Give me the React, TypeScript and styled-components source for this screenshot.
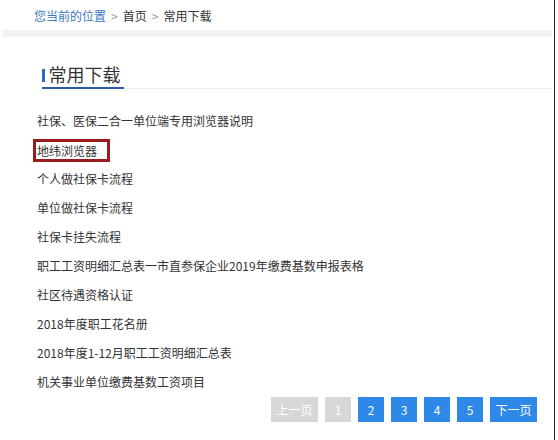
import styled, { createGlobalStyle } from 'styled-components';

const GlobalStyle = createGlobalStyle`
  html, body {
    margin: 0;
    padding: 0;
    background: #fff;
  }
  body {
    font-family: "Noto Sans CJK SC", "Noto Sans", sans-serif;
    color: #333;
  }
`;

const Page = styled.div`
  width: 555px;
  height: 440px;
  border-right: 1.5px solid #2a2a2a;
  box-sizing: border-box;
  overflow: hidden;
`;

const Breadcrumb = styled.div`
  display: flex;
  align-items: center;
  gap: 4px;
  height: 30px;
  padding-left: 34px;
  font-size: 12px;
`;

const CrumbLabel = styled.span`
  color: #3a78c4;
`;

const CrumbSep = styled.span`
  color: #999;
  font-size: 12px;
  padding: 0 1px;
`;

const CrumbLink = styled.span`
  color: #333;
`;

const Band = styled.div`
  height: 7px;
  margin: 0 2px 0 2px;
  background: #f3f3f3;
`;

const Content = styled.div`
  padding: 24px 2px 0 37px;
`;

const HeadingRow = styled.div`
  margin-left: 5px;
  border-bottom: 1px solid #eeeeee;
  display: flex;
`;

const HeadingTitle = styled.h2`
  margin: 0 0 -1px 0;
  display: flex;
  align-items: center;
  gap: 4px;
  font-size: 18px;
  font-weight: normal;
  line-height: 26px;
  color: #333;
  border-bottom: 2px solid #2b5ca6;
  padding-right: 3px;

  &::before {
    content: '';
    width: 2.5px;
    height: 13px;
    margin-top: 2px;
    background: #2a6bc0;
  }
`;

const List = styled.ul`
  list-style: none;
  margin: 17px 0 0 0;
  padding: 0;
`;

const Item = styled.li`
  font-size: 12px;
  line-height: 29px;
  height: 29px;
  color: #333;
  white-space: nowrap;
`;

const Marked = styled.span`
  display: inline-block;
  vertical-align: middle;
  margin-left: -4px;
  padding: 0 10px 0 1px;
  line-height: 17px;
  border: 3px solid #9c1c1c;
  margin-top: -2px;
`;

const Pager = styled.div`
  display: flex;
  justify-content: flex-end;
  gap: 7px;
  padding-right: 17px;
  margin-top: 1px;
`;

const PageBtn = styled.span<{ $wide?: boolean; $active?: boolean }>`
  display: flex;
  align-items: center;
  justify-content: center;
  width: ${({ $wide }) => ($wide ? '47px' : '26px')};
  height: 25px;
  font-size: 12px;
  color: #fff;
  background: ${({ $active }) => ($active ? '#2e88e8' : '#d7d7d7')};
`;

const items = [
  '社保、医保二合一单位端专用浏览器说明',
  '地纬浏览器',
  '个人做社保卡流程',
  '单位做社保卡流程',
  '社保卡挂失流程',
  '职工工资明细汇总表一市直参保企业2019年缴费基数申报表格',
  '社区待遇资格认证',
  '2018年度职工花名册',
  '2018年度1-12月职工工资明细汇总表',
  '机关事业单位缴费基数工资项目',
];

export default function App() {
  return (
    <>
      <GlobalStyle />
      <Page>
        <Breadcrumb>
          <CrumbLabel>您当前的位置</CrumbLabel>
          <CrumbSep>&gt;</CrumbSep>
          <CrumbLink>首页</CrumbLink>
          <CrumbSep>&gt;</CrumbSep>
          <CrumbLink>常用下载</CrumbLink>
        </Breadcrumb>
        <Band />
        <Content>
          <HeadingRow>
            <HeadingTitle>常用下载</HeadingTitle>
          </HeadingRow>
          <List>
            {items.map((text, i) => (
              <Item key={i}>{i === 1 ? <Marked>{text}</Marked> : text}</Item>
            ))}
          </List>
        </Content>
        <Pager>
          <PageBtn $wide>上一页</PageBtn>
          <PageBtn>1</PageBtn>
          <PageBtn $active>2</PageBtn>
          <PageBtn $active>3</PageBtn>
          <PageBtn $active>4</PageBtn>
          <PageBtn $active>5</PageBtn>
          <PageBtn $wide $active>下一页</PageBtn>
        </Pager>
      </Page>
    </>
  );
}
